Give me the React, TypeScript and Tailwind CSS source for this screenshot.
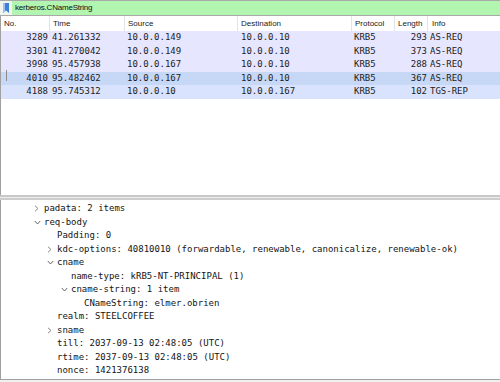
import React from 'react';

type Packet = { no: string; time: string; src: string; dst: string; proto: string; len: string; info: string; bg: string; mark?: boolean };

const packets: Packet[] = [
  { no: '3289', time: '41.261332', src: '10.0.0.149', dst: '10.0.0.10', proto: 'KRB5', len: '293', info: 'AS-REQ', bg: 'bg-[#e7e6ff]' },
  { no: '3301', time: '41.270042', src: '10.0.0.149', dst: '10.0.0.10', proto: 'KRB5', len: '373', info: 'AS-REQ', bg: 'bg-[#e7e6ff]' },
  { no: '3998', time: '95.457938', src: '10.0.0.167', dst: '10.0.0.10', proto: 'KRB5', len: '288', info: 'AS-REQ', bg: 'bg-[#e7e6ff]' },
  { no: '4010', time: '95.482462', src: '10.0.0.167', dst: '10.0.0.10', proto: 'KRB5', len: '367', info: 'AS-REQ', bg: 'bg-[#c7d8f6]', mark: true },
  { no: '4188', time: '95.745312', src: '10.0.0.10', dst: '10.0.0.167', proto: 'KRB5', len: '102', info: 'TGS-REP', bg: 'bg-[#d9e3fd]' },
];

type Line = { level: number; text: string; chevron?: 'open' | 'closed' };

const details: Line[] = [
  { level: 0, text: 'padata: 2 items', chevron: 'closed' },
  { level: 0, text: 'req-body', chevron: 'open' },
  { level: 1, text: 'Padding: 0' },
  { level: 1, text: 'kdc-options: 40810010 (forwardable, renewable, canonicalize, renewable-ok)', chevron: 'closed' },
  { level: 1, text: 'cname', chevron: 'open' },
  { level: 2, text: 'name-type: kRB5-NT-PRINCIPAL (1)' },
  { level: 2, text: 'cname-string: 1 item', chevron: 'open' },
  { level: 3, text: 'CNameString: elmer.obrien' },
  { level: 1, text: 'realm: STEELCOFFEE' },
  { level: 1, text: 'sname', chevron: 'closed' },
  { level: 1, text: 'till: 2037-09-13 02:48:05 (UTC)' },
  { level: 1, text: 'rtime: 2037-09-13 02:48:05 (UTC)' },
  { level: 1, text: 'nonce: 1421376138' },
];

const indents = ['pl-[33px]', 'pl-[46px]', 'pl-[60px]', 'pl-[73px]'];

const Chevron = ({ kind }: { kind?: 'open' | 'closed' }) => (
  <span className="w-[10px] h-[13.5px] flex items-center shrink-0">
    {kind === 'closed' && (
      <svg width="5" height="7" viewBox="0 0 5 7">
        <path d="M1 0.8 L4 3.5 L1 6.2" fill="none" stroke="#8a8a8a" strokeWidth="1" />
      </svg>
    )}
    {kind === 'open' && (
      <svg width="7" height="5" viewBox="0 0 7 5">
        <path d="M0.8 1 L3.5 4 L6.2 1" fill="none" stroke="#6a6a6a" strokeWidth="1" />
      </svg>
    )}
  </span>
);

const mono = { fontFamily: '"DejaVu Sans Mono", "Liberation Mono", monospace' };
const sans = { fontFamily: '"Liberation Sans", Arial, sans-serif' };

export default function App() {
  return (
    <div className="w-[500px] h-[382px] bg-[#f0f0f0] flex flex-col overflow-hidden">
      {/* Display filter */}
      <div className="h-[16px] flex items-center border-y border-[#a9a9a9] bg-[#b1f5b1] pr-[3px]">
        <div className="w-[12px] h-full flex items-center justify-center bg-[#eef5ee]">
          <svg width="6" height="10" viewBox="0 0 6 10">
            <path d="M0 0 H6 V10 L3 7.6 L0 10 Z" fill="#3f7fd6" />
            <path d="M0 0 H2 V8.5 L0 10 Z" fill="#9cc2f2" />
          </svg>
        </div>
        <span className="pl-[3px] text-[8px] text-[#111] tracking-[-0.2px]" style={sans}>kerberos.CNameString</span>
      </div>

      {/* Packet list */}
      <div className="h-[179px] bg-white border-l border-[#a0a0a0] flex flex-col">
        <div className="h-[15px] flex items-center text-[8px] text-[#222]" style={sans}>
          <div className="w-[49px] h-full flex items-center pl-[3px] border-r border-[#e3e3e3]">No.</div>
          <div className="w-[75px] h-full flex items-center pl-[3px] border-r border-[#e3e3e3]">Time</div>
          <div className="w-[113px] h-full flex items-center pl-[3px] border-r border-[#e3e3e3]">Source</div>
          <div className="w-[114px] h-full flex items-center pl-[3px] border-r border-[#e3e3e3]">Destination</div>
          <div className="w-[43px] h-full flex items-center pl-[3px] border-r border-[#e3e3e3]">Protocol</div>
          <div className="w-[33px] h-full flex items-center pl-[3px] border-r border-[#e3e3e3]">Length</div>
          <div className="flex-1 h-full flex items-center pl-[4px]">Info</div>
        </div>
        {packets.map((p) => (
          <div key={p.no} className={`h-[13.5px] flex items-center text-[9px] text-[#222] ${p.bg}`} style={mono}>
            <div className="w-[49px] relative text-right pr-[2px]">
              {p.mark && <span className="absolute left-[5px] top-[-2px] w-px h-[11px] bg-[#8c8c8c]" />}
              {p.no}
            </div>
            <div className="w-[75px] pl-[2px]">{p.time}</div>
            <div className="w-[113px] pl-[2px]">{p.src}</div>
            <div className="w-[114px] pl-[3px]">{p.dst}</div>
            <div className="w-[43px] pl-[2px]">{p.proto}</div>
            <div className="w-[33px] text-right pr-[1px]">{p.len}</div>
            <div className="flex-1 pl-[2px]">{p.info}</div>
          </div>
        ))}
      </div>

      {/* Splitter */}
      <div className="h-[5px] flex flex-col">
        <div className="h-[2px] bg-[#c8c8c8]" />
        <div className="h-[1px] bg-[#ededed]" />
        <div className="h-[2px] bg-[#cdcdcd]" />
      </div>

      {/* Packet details */}
      <div className="h-[180px] pt-[2px] bg-white border-l border-b border-[#a0a0a0] text-[9px] text-[#141414]" style={mono}>
        {details.map((d, i) => (
          <div key={i} className={`h-[13.5px] flex items-center whitespace-nowrap ${indents[d.level]}`}>
            <Chevron kind={d.chevron} />
            <span>{d.text}</span>
          </div>
        ))}
      </div>
    </div>
  );
}
